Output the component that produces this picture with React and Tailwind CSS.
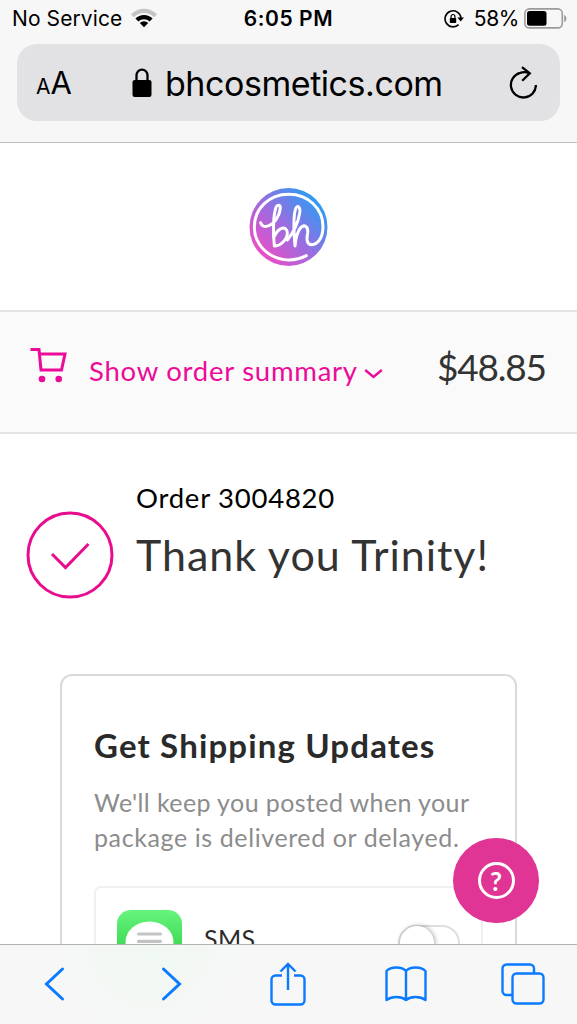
import React from "react";

const IOS = "font-['Inter','Liberation_Sans',sans-serif]";

function StatusBar() {
  return (
    <div className="grid h-[37px] grid-cols-3 items-center px-3 text-black">
      <div className="flex items-center gap-[9px]">
        <span className="text-[21px] leading-none tracking-[0.1px] whitespace-nowrap">No Service</span>
        <svg width="26" height="20" viewBox="0 0 26 20" className="mb-px shrink-0">
          <path d="M0 6.2 A18.4 18.4 0 0 1 26 6.2 L23 9.2 A14.1 14.1 0 0 0 3 9.2 Z" fill="#c4c4c4" />
          <path d="M4.4 10.6 A12.2 12.2 0 0 1 21.6 10.6 L18.6 13.6 A7.9 7.9 0 0 0 7.4 13.6 Z" fill="#000" />
          <path d="M8.8 15 A6 6 0 0 1 17.2 15 L13 19.2 Z" fill="#000" />
        </svg>
      </div>
      <div className="text-center text-[21px] leading-none font-semibold tracking-[0.55px] whitespace-nowrap">6:05 PM</div>
      <div className="-mr-[2px] flex items-center justify-end">
        <svg width="21" height="18" viewBox="0 0 21 18" fill="none" className="mr-[9px] shrink-0">
          <path d="M14.6 14.6 A8 8 0 1 1 17 8" stroke="#000" strokeWidth="1.6" />
          <path d="M13.4 7.5 H20 L16.7 11.6 Z" fill="#000" />
          <rect x="5.8" y="8" width="6.4" height="5" rx="0.8" fill="#000" />
          <path d="M7.1 8 V6.4 A1.9 1.9 0 0 1 10.9 6.4 V8" stroke="#000" strokeWidth="1.2" />
        </svg>
        <span className="text-[21px] leading-none tracking-[-0.4px]">58%</span>
        <svg width="43" height="21" viewBox="0 0 43 21" fill="none" className="mb-px ml-[5px] shrink-0">
          <rect x="0.9" y="0.9" width="37.4" height="19" rx="4.5" stroke="#9b9b9b" strokeWidth="1.6" />
          <rect x="3" y="3" width="19.5" height="14.8" rx="2.5" fill="#000" />
          <path d="M40.2 7 C43.2 8 43.2 13 40.2 14 Z" fill="#9b9b9b" />
        </svg>
      </div>
    </div>
  );
}

function AddressBar() {
  return (
    <div className="mx-[17px] mt-[7px] flex h-[77px] items-center rounded-[20px] bg-[#e2e2e4] pr-[23px] pl-[19px] text-black">
      <div className="flex w-[96px] items-baseline leading-none">
        <span className="text-[21px]">A</span>
        <span className="text-[31px]">A</span>
      </div>
      <svg width="20" height="30" viewBox="0 0 20 30" fill="none" className="shrink-0">
        <rect x="0.5" y="12" width="19" height="17" rx="2.2" fill="#000" />
        <path d="M4.5 13 V7.5 A5.5 5.9 0 0 1 15.5 7.5 V13" stroke="#000" strokeWidth="2.3" />
      </svg>
      <span className="ml-[13px] flex-1 pt-[3px] text-[34px] leading-none tracking-[-0.45px] whitespace-nowrap">bhcosmetics.com</span>
      <svg width="28" height="34" viewBox="0 0 28 34" fill="none" stroke="#000" strokeWidth="2.3" className="shrink-0">
        <path d="M20.2 7.2 C17.6 6.1 14.2 5.9 11.2 6.9 A12.5 12.5 0 1 0 26.9 19" />
        <path d="M13 1.2 L20.8 7.4 L13.2 14.8" />
      </svg>
    </div>
  );
}

function Logo() {
  return (
    <svg width="79" height="78" viewBox="57 52 237 234" fill="none">
      <defs>
        <linearGradient id="logoFill" x1="0.1" y1="0.85" x2="0.85" y2="0.15">
          <stop offset="0" stopColor="#f04cc4" />
          <stop offset="0.5" stopColor="#9a6de0" />
          <stop offset="1" stopColor="#2f9bf4" />
        </linearGradient>
      </defs>
      <circle cx="175.5" cy="169" r="117" fill="url(#logoFill)" />
      <g stroke="#fff" strokeWidth="9" strokeLinecap="round" strokeLinejoin="round">
        <path d="M229 255 C160 292 73 245 73 170 C73 113 118 71 176 71 C235 71 279 114 279 168 C279 202 262 222 246 222 C228 222 230 204 233 186 C235 166 222 160 211 172 C202 184 197 204 195 226 C192 190 189 135 197 114 C203 101 212 110 209 128 C205 152 192 184 172 208" />
        <path d="M92 156 C94 166 104 170 117 165 C136 157 149 134 151 112 C151 102 142 101 138 110 C129 136 129 190 133 226 C152 226 173 205 172 186 C170 165 146 168 134 196" />
      </g>
    </svg>
  );
}

function OrderSummary() {
  return (
    <div className="flex h-[124px] items-start border-y-2 border-[#e5e5e5] bg-[#fafafa]">
      <svg width="37" height="36" viewBox="0 0 37 36" fill="none" className="mt-[35px] ml-[30px] shrink-0">
        <path d="M0.5 2.5 H9 L11 23 H31.5 L35 7 H10" stroke="#ec0b98" strokeWidth="3" />
        <circle cx="12" cy="32" r="3.3" fill="#ec0b98" />
        <circle cx="28.7" cy="32" r="3.3" fill="#ec0b98" />
      </svg>
      <button type="button" className="mt-[41px] ml-[22px] flex items-center text-[#ec0b98]">
        <span className="w-[268px] text-left text-[27.5px] leading-9 tracking-[0.75px] whitespace-nowrap">Show order summary</span>
        <svg width="19" height="12" viewBox="0 0 19 12" fill="none" className="mt-1.5 ml-[7px]">
          <path d="M1.2 2 L9.5 9 L17.8 2" stroke="#ec0b98" strokeWidth="2.4" />
        </svg>
      </button>
      <span className="mt-[31px] ml-[54px] text-[37px] leading-[48px] tracking-[-1.2px] whitespace-nowrap text-[#333]">$48.85</span>
    </div>
  );
}

function ThankYou() {
  return (
    <div className="flex h-[240px] pt-[44px]">
      <svg width="88" height="88" viewBox="0 0 88 88" fill="none" stroke="#e80d8f" strokeWidth="3" className="mt-[33px] ml-[26px] shrink-0">
        <circle cx="44" cy="44" r="42" />
        <path d="M26 43 L39.5 56.5 L62.5 33" />
      </svg>
      <div className="ml-[22px] whitespace-nowrap">
        <p className="text-[27.5px] leading-10 tracking-[0.75px] text-black">Order 3004820</p>
        <h1 className="mt-[9px] text-[43px] leading-[56px] tracking-[0.95px] text-[#333]">Thank you Trinity!</h1>
      </div>
    </div>
  );
}

function ShippingCard() {
  return (
    <div className="mx-[60px] h-[400px] rounded-[12px] border-2 border-[#dadada] px-8 pt-[48px]">
      <h2 className="text-[33px] leading-[42px] font-bold tracking-[1.15px] whitespace-nowrap text-[#2a2a2a]">Get Shipping Updates</h2>
      <p className="mt-[19px] text-[25px] leading-[34.5px] tracking-[0.4px] whitespace-nowrap text-[#8c8c8c]">
        We'll keep you posted when your
        <br />
        <span className="tracking-[0.6px]">package is delivered or delayed.</span>
      </p>
      <div className="mt-[32px] flex h-28 items-start rounded-[7px] border-2 border-[#f0f0f0] pt-[22px] pr-[21px] pl-[21px]">
        <svg width="65" height="65" viewBox="0 0 65 65">
          <defs>
            <linearGradient id="smsFill" x1="0" y1="0" x2="0" y2="1">
              <stop offset="0" stopColor="#67f47e" />
              <stop offset="1" stopColor="#1fc636" />
            </linearGradient>
          </defs>
          <rect width="65" height="65" rx="14" fill="url(#smsFill)" />
          <ellipse cx="32.5" cy="32" rx="24" ry="20.5" fill="#fff" />
          <path d="M21.5 24 H43.5 M21.5 31.3 H43.5" stroke="#c3c3c3" strokeWidth="3.2" strokeLinecap="round" />
        </svg>
        <span className="mt-[11px] ml-[22px] text-[25px] leading-[34px] tracking-[0.4px] text-[#2a2a2a]">SMS</span>
        <span className="mt-[15px] ml-auto flex h-[36px] w-[62px] rounded-full border-2 border-[#dedede] bg-white">
          <span className="-mt-px size-[34px] rounded-full bg-white shadow-[1px_0_5px_rgba(0,0,0,0.35)]" />
        </span>
      </div>
    </div>
  );
}

function Toolbar() {
  return (
    <nav className="grid h-[80px] shrink-0 grid-cols-5 justify-items-center border-t border-[#b2b2b2] bg-[#f7f7f7] bg-[radial-gradient(circle_at_150px_0px,#f0f8f2,transparent_110px)]">
      <svg width="24" height="36" viewBox="0 0 24 36" fill="none" stroke="#0a7aff" strokeWidth="3" strokeLinecap="round" className="mt-[21px] mr-[7px]">
        <path d="M20.5 3 L4.5 18 L20.5 33" />
      </svg>
      <svg width="24" height="36" viewBox="0 0 24 36" fill="none" stroke="#0a7aff" strokeWidth="3" strokeLinecap="round" className="mt-[21px] mr-[2px]">
        <path d="M3.5 3 L19.5 18 L3.5 33" />
      </svg>
      <svg width="36" height="45" viewBox="0 0 36 45" fill="none" stroke="#0a7aff" strokeWidth="2.4" className="mt-[17px]">
        <path d="M12 13.5 H5.5 A4 4 0 0 0 1.5 17.5 V38.5 A4 4 0 0 0 5.5 42.5 H30.5 A4 4 0 0 0 34.5 38.5 V17.5 A4 4 0 0 0 30.5 13.5 H24" />
        <path d="M18 28 V2.5 M10.5 9.5 L18 2 L25.5 9.5" />
      </svg>
      <svg width="42" height="38" viewBox="0 0 42 38" fill="none" stroke="#0a7aff" strokeWidth="2.4" strokeLinejoin="round" className="mt-[20px] ml-[4px]">
        <path d="M21 6 C17 1.5 6 1.2 1.5 6 V35 C7 31 16 31 21 35 C26 31 35 31 40.5 35 V6 C36 1.2 25 1.5 21 6 Z M21 6 V35" />
      </svg>
      <svg width="44" height="42" viewBox="0 0 44 42" fill="none" stroke="#0a7aff" strokeWidth="2.4" className="mt-[18px] ml-[7px]">
        <path d="M11.5 32 H5.5 A4 4 0 0 1 1.5 28 V5.5 A4 4 0 0 1 5.5 1.5 H29 A4 4 0 0 1 33 5.5 V10.5" />
        <rect x="11.5" y="10.5" width="31" height="30" rx="4" />
      </svg>
    </nav>
  );
}

export default function App() {
  return (
    <div className="relative flex h-[1024px] w-[577px] flex-col overflow-hidden bg-white font-['Lato','Liberation_Sans',sans-serif]">
      <header className={`${IOS} h-[143px] shrink-0 border-b border-[#bdbdbd] bg-[#f7f7f7]`}>
        <StatusBar />
        <AddressBar />
      </header>

      <main className="min-h-0 flex-1 overflow-hidden">
        <div className="flex h-[167px] items-center justify-center">
          <Logo />
        </div>
        <OrderSummary />
        <ThankYou />
        <ShippingCard />
      </main>

      {/* floating help button */}
      <button type="button" className="absolute top-[838px] left-[453px] flex h-[85px] w-[86px] items-center justify-center rounded-full bg-[#e03594]">
        <span className="flex size-[37px] items-center justify-center rounded-full border-[3.5px] border-white pt-px text-[26px] leading-none font-bold text-white">?</span>
      </button>

      <Toolbar />
    </div>
  );
}
